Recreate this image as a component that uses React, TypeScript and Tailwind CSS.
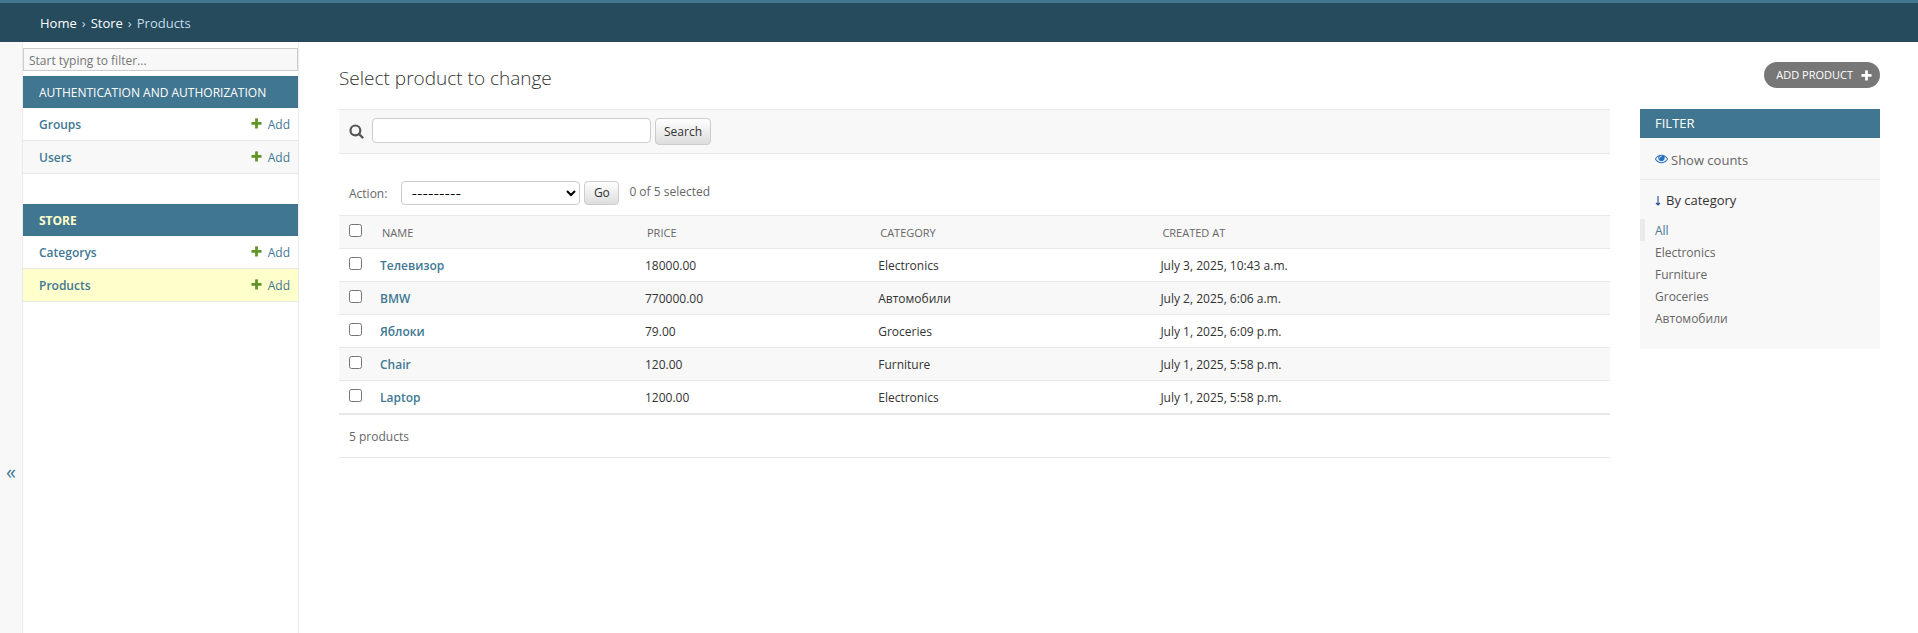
import React from "react";

const products = [
  { name: "Телевизор", price: "18000.00", category: "Electronics", created: "July 3, 2025, 10:43 a.m." },
  { name: "BMW", price: "770000.00", category: "Автомобили", created: "July 2, 2025, 6:06 a.m." },
  { name: "Яблоки", price: "79.00", category: "Groceries", created: "July 1, 2025, 6:09 p.m." },
  { name: "Chair", price: "120.00", category: "Furniture", created: "July 1, 2025, 5:58 p.m." },
  { name: "Laptop", price: "1200.00", category: "Electronics", created: "July 1, 2025, 5:58 p.m." },
];

const categories = ["All", "Electronics", "Furniture", "Groceries", "Автомобили"];

function PlusIcon({ className }: { className: string }) {
  return (
    <svg viewBox="0 0 1792 1792" className={className} fill="currentColor" aria-hidden="true">
      <path d="M1600 796v192q0 40-28 68t-68 28h-416v416q0 40-28 68t-68 28h-192q-40 0-68-28t-28-68v-416h-416q-40 0-68-28t-28-68v-192q0-40 28-68t68-28h416v-416q0-40 28-68t68-28h192q40 0 68 28t28 68v416h416q40 0 68 28t28 68z" />
    </svg>
  );
}

function SearchIcon() {
  return (
    <svg viewBox="0 0 15 15" className="size-[15px] text-[#555555]" fill="none" stroke="currentColor" aria-hidden="true">
      <circle cx="6.4" cy="6.4" r="4.9" strokeWidth="2.2" />
      <path d="M10 10 13.500 13.500" strokeWidth="2.4" strokeLinecap="round" />
    </svg>
  );
}

function EyeIcon() {
  return (
    <svg viewBox="0 0 1792 1792" className="mb-1 size-[13px]" fill="#2b70bf" aria-hidden="true">
      <path d="M1664 960q-152-236-381-353 61 104 61 225 0 185-131.500 316.500t-316.500 131.500-316.500-131.500-131.500-316.500q0-121 61-225-229 117-381 353 133 205 333.500 326.500t434.500 121.500 434.500-121.500 333.500-326.500zm-720-384q0-20-14-34t-34-14q-125 0-214.500 89.500t-89.500 214.500q0 20 14 34t34 14 34-14 14-34q0-86 61-147t147-61q20 0 34-14t14-34zm848 384q0 34-20 69-140 230-376.500 368.500t-499.500 138.500-499.500-139-376.500-368q-20-35-20-69t20-69q140-229 376.500-368t499.500-139 499.500 139 376.500 368q20 35 20 69z" />
    </svg>
  );
}

function NavSection({ title, items, current }: { title: string; items: string[]; current?: string }) {
  return (
    <section className="mb-[30px]">
      <h2 className={`bg-[#417690] px-4 pt-0.5 text-xs leading-[30px] uppercase ${current ? "font-bold text-[#ffffcc]" : "font-medium text-white"}`}>
        <a href="#section">{title}</a>
      </h2>
      <ul>
        {items.map((item, i) => (
          <li
            key={item}
            className={`flex h-[33px] items-center justify-between border-b border-[#e8e8e8] pt-0.5 pr-2 pl-4 text-[#417893] ${
              item === current ? "bg-[#ffffcc]" : i % 2 ? "bg-[#f8f8f8]" : "bg-white"
            }`}
          >
            <a href="#list" className="font-semibold">{item}</a>
            <a href="#add" className="flex items-center gap-[5px]">
              <PlusIcon className="mb-1 size-[13px] text-[#5f9428]" />
              Add
            </a>
          </li>
        ))}
      </ul>
    </section>
  );
}

const buttonClass = "min-w-[35px] rounded border border-[#cccccc] bg-gradient-to-b from-white to-[#dddddd] px-2 text-[#333333]";
const checkClass = "mb-1 block size-[13px]";
const headClass = "px-[10px] pt-0.5 pb-0 font-normal";
const cellClass = "px-2 pt-0.5 pb-0";

export default function App() {
  return (
    <div className="flex min-h-screen flex-col bg-white font-['Open_Sans','Noto_Sans',sans-serif] text-xs text-[#333333]">
      <nav aria-label="Breadcrumbs" className="flex h-[42px] items-center gap-[5px] border-t-[3px] border-[#417690] bg-[#264b5d] px-10 pt-0.5 text-[13px] text-[#c4dce8]">
        <a href="#home" className="font-medium text-white">Home</a>
        <span>›</span>
        <a href="#store" className="font-medium text-white">Store</a>
        <span>›</span>
        <span>Products</span>
      </nav>

      <div className="flex grow">
        <button type="button" aria-label="Toggle navigation" className="flex w-[23px] shrink-0 items-center justify-center border-r border-[#eaeaea] bg-[#f8f8f8] pt-[268px] text-xl text-[#417893]">
          «
        </button>
        <nav aria-label="Sidebar" className="w-[276px] shrink-0 border-r border-[#eaeaea] pt-[6px]">
          <input
            type="search"
            aria-label="Filter navigation items"
            placeholder="Start typing to filter..."
            className="mb-[5px] block h-[23px] w-full border border-[#cccccc] bg-[#f8f8f8] px-[5px] pt-0.5 placeholder:text-[#757575]"
          />
          <NavSection title="Authentication and Authorization" items={["Groups", "Users"]} />
          <NavSection title="Store" items={["Categorys", "Products"]} current="Products" />
        </nav>

        <main className="min-w-0 grow pt-5 pr-[38px] pl-10">
          <div className="mb-5 flex h-[27px] items-start justify-between">
            <h1 className="pt-0.5 text-[19px] leading-7 font-light text-[#333333]">Select product to change</h1>
            <a href="#add-product" className="flex h-[26px] items-center gap-[7px] rounded-full bg-[#777777] pr-[7px] pl-3 text-[11px] font-medium text-white uppercase">
              Add product
              <PlusIcon className="size-[13px]" />
            </a>
          </div>

          <div className="flex items-start gap-[30px]">
            <div className="min-w-0 grow">
              <form className="flex h-[45px] items-start gap-1 border-y border-[#e8e8e8] bg-[#f8f8f8] px-[10px] pt-2" onSubmit={(e) => e.preventDefault()}>
                <label htmlFor="searchbar" aria-label="Search products" className="mr-1 pt-[6px]">
                  <SearchIcon />
                </label>
                <input id="searchbar" type="text" className="h-[25px] w-[279px] rounded border border-[#cccccc] bg-white px-[5px]" />
                <button type="submit" className={`h-[27px] ${buttonClass}`}>Search</button>
              </form>

              <div className="flex items-center gap-1 px-[10px] pt-[27px] pb-[10px] text-[#666666]">
                <label htmlFor="action" className="mr-[10px] pt-0.5">Action:</label>
                <select id="action" className="h-6 w-[179px] rounded border border-[#cccccc] bg-white px-[5px] font-[Inter,sans-serif] text-xs text-black">
                  <option>---------</option>
                </select>
                <button type="button" className={`mr-[6px] h-6 ${buttonClass}`}>Go</button>
                <span className="pb-0.5">0 of 5 selected</span>
              </div>

              <table className="w-full table-fixed border-collapse text-left">
                <colgroup>
                  <col className="w-[33px]" />
                  <col className="w-[20.85%]" />
                  <col className="w-[18.35%]" />
                  <col className="w-[22.2%]" />
                  <col />
                </colgroup>
                <thead>
                  <tr className="h-[33px] border-y border-[#e8e8e8] bg-[#f8f8f8] text-[11px] text-[#666666] uppercase">
                    <th className="p-0 pl-[10px]"><input type="checkbox" aria-label="Select all products" className={checkClass} /></th>
                    <th className={headClass}>Name</th>
                    <th className={headClass}>Price</th>
                    <th className={headClass}>Category</th>
                    <th className={headClass}>Created at</th>
                  </tr>
                </thead>
                <tbody>
                  {products.map((p) => (
                    <tr key={p.name} className="h-[33px] border-b border-[#e8e8e8] even:bg-[#f8f8f8]">
                      <td className="p-0 pl-[10px]"><input type="checkbox" aria-label={`Select ${p.name}`} className={checkClass} /></td>
                      <th scope="row" className={`font-semibold text-[#417893] ${cellClass}`}><a href="#product">{p.name}</a></th>
                      <td className={cellClass}>{p.price}</td>
                      <td className={cellClass}>{p.category}</td>
                      <td className={cellClass}>{p.created}</td>
                    </tr>
                  ))}
                </tbody>
              </table>
              <p className="h-11 border-y border-[#e8e8e8] px-[10px] leading-[43px] text-[#666666]">5 products</p>
            </div>

            <aside className="w-60 shrink-0 bg-[#f8f8f8] pb-5">
              <h2 className="bg-[#417690] px-[15px] text-[13px] leading-[29px] text-white uppercase">Filter</h2>
              <div className="flex h-[42px] items-center border-b border-[#e8e8e8] px-[15px] pt-1 text-[13px] text-[#666666]">
                <a href="#counts" className="flex items-center gap-[3px]"><EyeIcon />Show counts</a>
              </div>
              <details open>
                <summary className="flex h-[39px] list-none items-center gap-[5px] px-[15px] pt-0.5 text-[13px]">
                  <svg viewBox="0 0 6 11" className="h-[11px] w-[6px]" fill="none" stroke="#264b8d" aria-hidden="true">
                    <path d="M3 1v9M1 8l2 2 2-2" strokeWidth="1.1" />
                  </svg>
                  By category
                </summary>
                <ul>
                  {categories.map((c, i) => (
                    <li key={c} className={`border-l-[5px] pt-0.5 pl-[10px] leading-5 ${i === 0 ? "border-[#eaeaea] text-[#417893]" : "border-transparent text-[#666666]"}`}>
                      <a href="#category">{c}</a>
                    </li>
                  ))}
                </ul>
              </details>
            </aside>
          </div>
        </main>
      </div>
    </div>
  );
}
